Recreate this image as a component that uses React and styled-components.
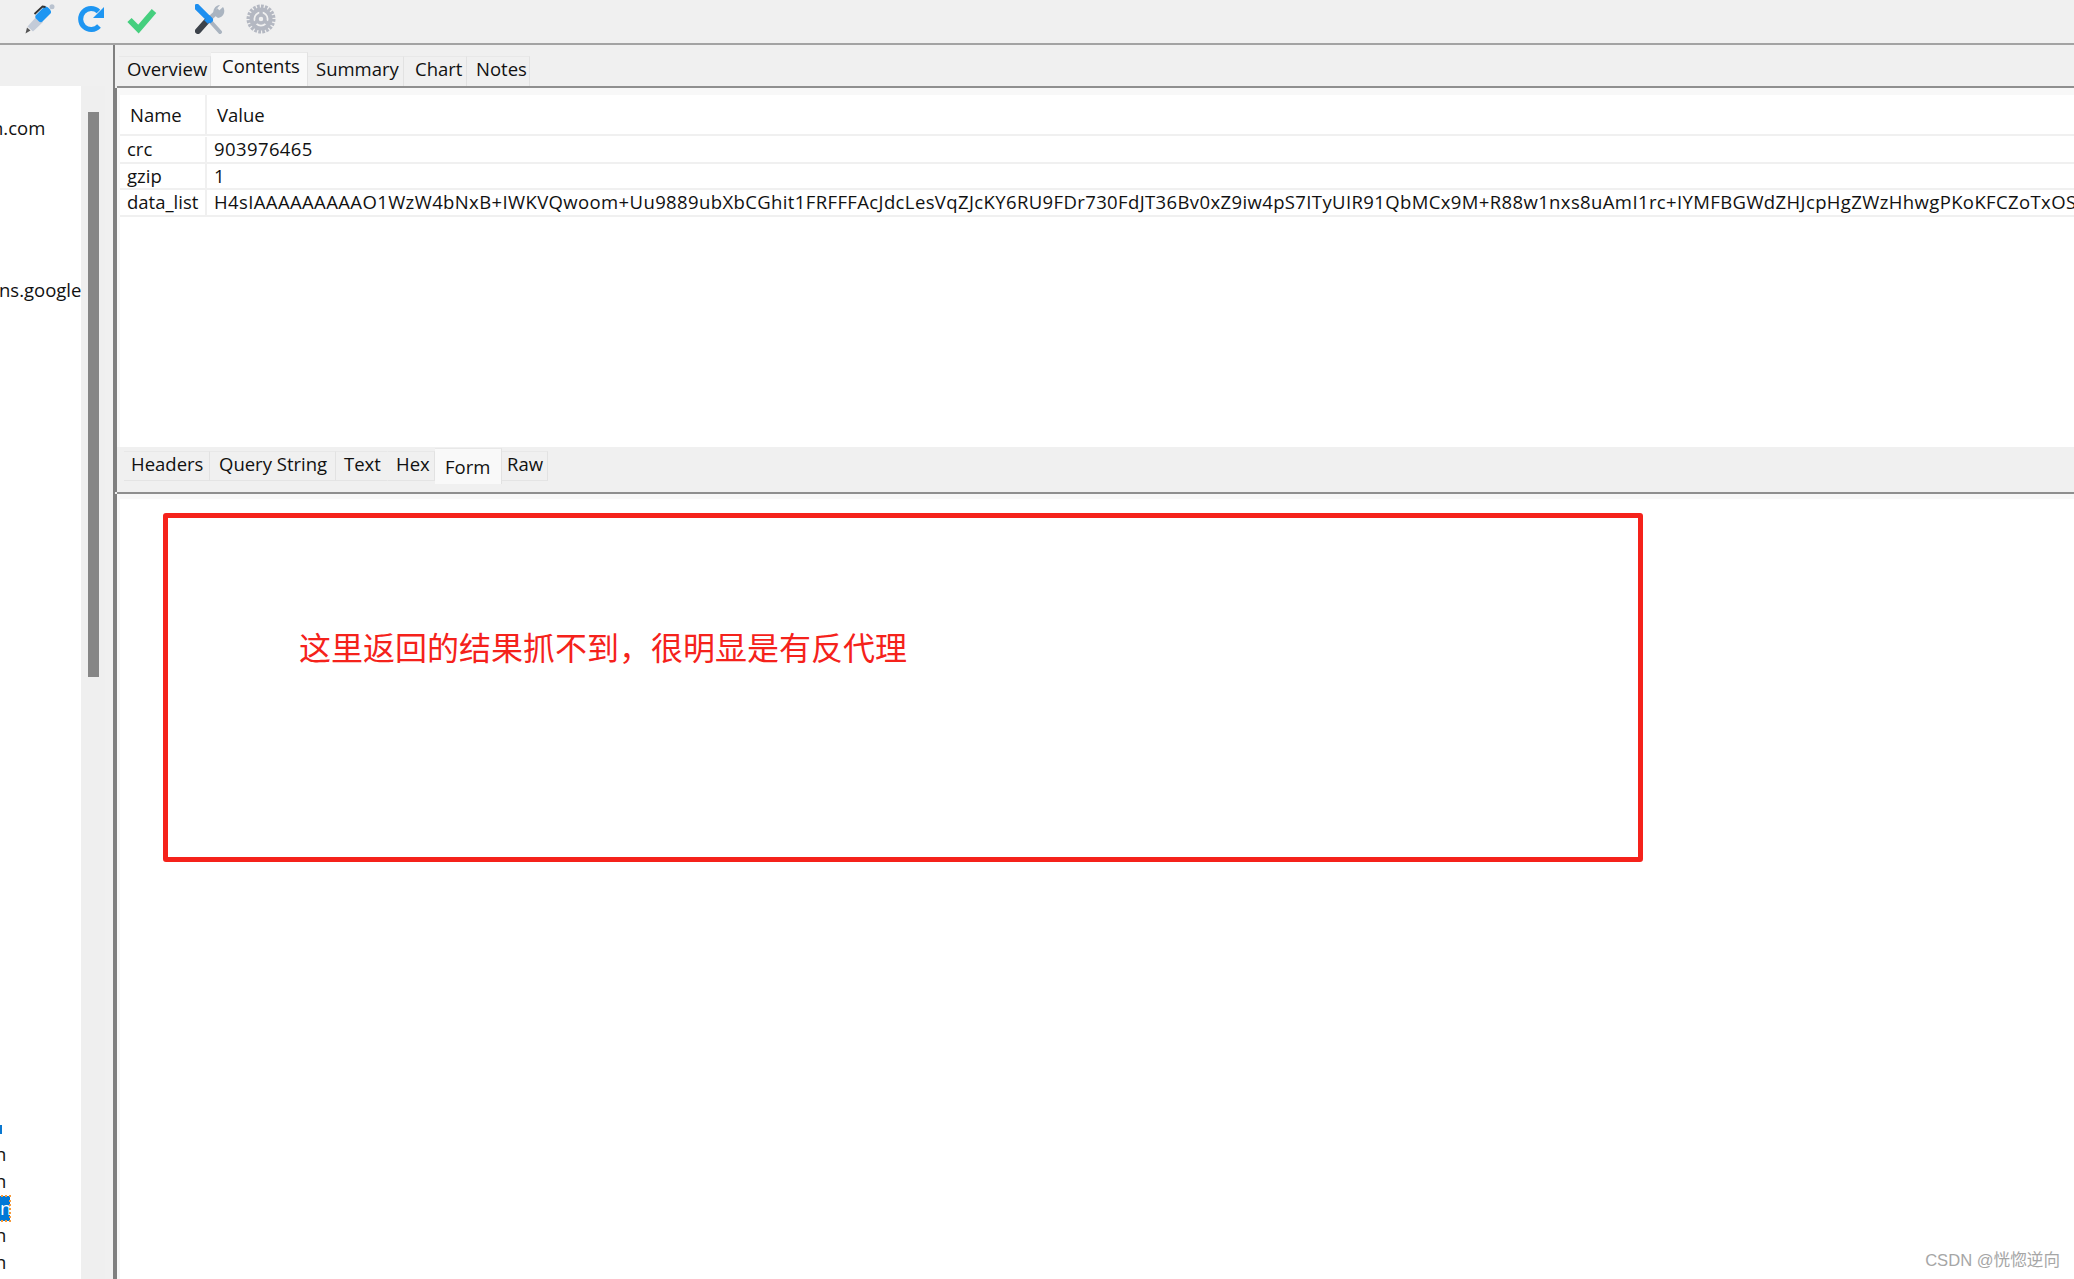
import React from "react";
import styled, { createGlobalStyle } from "styled-components";

const GlobalStyle = createGlobalStyle`
  html, body { margin: 0; padding: 0; background: #fff; }
  body { font-family: "Open Sans", "Noto Sans", "Noto Sans CJK SC", sans-serif; color: #111; }
`;

const Page = styled.div`
  width: 2074px;
  height: 1279px;
  overflow: hidden;
  display: flex;
  flex-direction: column;
  font-size: 18.5px;
`;

const Toolbar = styled.div`
  height: 45px;
  flex: none;
  background: #f0f0f0;
  border-bottom: 2px solid #a3a3a3;
  display: flex;
  align-items: flex-start;
  padding: 4px 0 0 25px;
  box-sizing: border-box;
`;

const ToolIcon = styled.svg`
  width: ${({ $w }) => $w}px;
  height: 30px;
  margin-right: ${({ $gap }) => $gap}px;
  flex: none;
`;

const Main = styled.div`
  flex: 1;
  display: flex;
  min-height: 0;
`;

const LeftPane = styled.div`
  width: 113px;
  flex: none;
  background: #f0f0f0;
  padding-top: 41px;
  box-sizing: border-box;
  display: flex;
`;

const HostList = styled.div`
  width: 81px;
  flex: none;
  background: #fff;
  padding-top: 28px;
  overflow: hidden;
`;

const HostRow = styled.div`
  height: 27px;
  line-height: 27px;
  white-space: nowrap;
  margin-left: ${({ $shift }) => $shift || 0}px;
`;

const SelectedHost = styled.span`
  display: inline-block;
  height: 25px;
  line-height: 24px;
  width: 15px;
  padding-left: 5px;
  box-sizing: border-box;
  background: #0078d7;
  color: #fff;
  outline: 2px dotted #f59a3c;
  outline-offset: -1px;
`;

const BlueStub = styled.span`
  display: inline-block;
  width: 2px;
  height: 9px;
  background: #0a78d0;
  margin-left: 5px;
`;

const ScrollTrack = styled.div`
  width: 24px;
  flex: none;
  background: #efefef;
  padding-top: 26px;
  box-sizing: border-box;
`;

const ScrollThumb = styled.div`
  width: 11px;
  height: 565px;
  margin-left: 7px;
  background: #868686;
`;

const Splitter = styled.div`
  flex: none;
  width: 2px;
  background: #7f7f7f;
`;

const RightPane = styled.div`
  flex: 1;
  min-width: 0;
  display: flex;
  flex-direction: column;
  background: #f0f0f0;
`;

const TopTabs = styled.div`
  height: 41px;
  flex: none;
  display: flex;
  align-items: flex-end;
  padding-left: 4px;
  box-sizing: border-box;
`;

const Tab = styled.div`
  width: ${({ $w }) => $w}px;
  height: ${({ $active, $h }) => ($active ? $h + 4 : $h)}px;
  flex: none;
  box-sizing: border-box;
  background: ${({ $active }) => ($active ? "#f9f9f9" : "#f0f0f0")};
  border-right: 1px solid ${({ $plain }) => ($plain ? "transparent" : "#e2e2e2")};
  border-top: 1px solid #e8e8e8;
  padding-left: ${({ $pad }) => $pad}px;
  line-height: ${({ $active, $h }) => ($active ? $h - 5 : $h - 7)}px;
  white-space: nowrap;
`;

const TabLine = styled.div`
  height: 2px;
  flex: none;
  background: #8f8f8f;
  margin-left: 2px;
`;

const UpperBody = styled.div`
  height: 359px;
  flex: none;
  background: #f8f8f8;
  padding: 7px 0 0 3px;
  border-left: 2px solid #7f7f7f;
  box-sizing: border-box;
`;

const Table = styled.div`
  height: 100%;
  background: #fff;
  overflow: hidden;
`;

const Row = styled.div`
  display: flex;
  height: ${({ $h }) => $h}px;
  line-height: ${({ $h }) => $h}px;
  border-bottom: 2px solid #f0f0f0;
  margin-bottom: ${({ $mb }) => $mb || 0}px;
  white-space: nowrap;
`;

const NameCell = styled.div`
  width: 87px;
  flex: none;
  box-sizing: border-box;
  padding-left: ${({ $head }) => ($head ? 10 : 7)}px;
  border-right: 2px solid #f0f0f0;
`;

const ValueCell = styled.div`
  flex: 1;
  min-width: 0;
  padding-left: ${({ $head }) => ($head ? 10 : 7)}px;
  letter-spacing: ${({ $spacing }) => $spacing || 0}px;
`;

const LowerTabs = styled.div`
  height: 45px;
  flex: none;
  display: flex;
  align-items: flex-start;
  padding: 1px 0 0 7px;
  box-sizing: border-box;
  border-left: 2px solid #7f7f7f;
`;

const FormTab = styled(Tab)`
  line-height: 35px;
`;

const LowerTab = styled(Tab)`
  margin-top: 3px;
  border-bottom: 1px solid #e4e4e4;
`;

const LowerBody = styled.div`
  flex: 1;
  background: #f8f8f8;
  padding: 5px 0 0 3px;
  border-left: 2px solid #7f7f7f;
  box-sizing: border-box;
  display: flex;
  flex-direction: column;
  min-height: 0;
`;

const Content = styled.div`
  flex: 1;
  background: #fff;
  padding: 14px 0 0 43px;
  position: relative;
`;

const RedBox = styled.div`
  width: 1480px;
  height: 349px;
  box-sizing: border-box;
  border: 5px solid #f5221b;
  border-radius: 3px;
  padding: 106px 0 0 131px;
`;

const RedNote = styled.div`
  font-family: "Noto Sans CJK SC", sans-serif;
  font-size: 32px;
  line-height: 44px;
  color: #f5221b;
  white-space: nowrap;
`;

const Watermark = styled.div`
  position: absolute;
  right: 14px;
  bottom: 8px;
  font-family: "Liberation Sans", "Noto Sans CJK SC", sans-serif;
  font-size: 16.6px;
  color: #a6a6a6;
`;

const hostRows = Array.from({ length: 43 }, (_, i) => i);

const DATA_LIST =
  "H4sIAAAAAAAAAO1WzW4bNxB+IWKVQwoom+Uu9889ubXbCGhit1FRFFFAcJdcLesVqZJcKY6RU9FDr730FdJT36Bv0xZ9iw4pS7ITyUIR91QbMCx9M+R88w1nxs8uAmI1rc+IYMFBGWdZHJcpHgZWzHhwgPKoKFCZoTxOS";

function HostCell({ i }) {
  if (i === 0) return <HostRow $shift={-8}>n.com</HostRow>;
  if (i === 6) return <HostRow $shift={-1}>ns.google</HostRow>;
  if (i === 37) return <HostRow $shift={-5}><BlueStub /></HostRow>;
  if (i === 40) return <HostRow $shift={-5}><SelectedHost>n</SelectedHost></HostRow>;
  if (i === 38 || i === 39 || i === 41 || i === 42) return <HostRow $shift={-5}>n</HostRow>;
  return <HostRow />;
}

export default function App() {
  return (
    <Page>
      <GlobalStyle />
      <Toolbar>
        <ToolIcon $w={30} $gap={22} viewBox="0 0 30 30">
          <path d="M0.500 29.500l1.500-6 3.500 3z" fill="#555" />
          <path d="M2.500 22.500L12 12l6 6-10 9.500z" fill="#c3cbd8" />
          <path d="M11 11l8-8c2.500-2.500 9 4 6.500 6.500l-8 8c-1 1-2.500 1-3.500 0l-3-3c-1-1-1-2.500 0-3.500z" fill="#1e96f2" />
          <path d="M9.500 10l8-7.500 3 .5" stroke="#333" strokeWidth="1.800" fill="none" />
          <circle cx="27" cy="2.800" r="2.500" fill="#b9c2cf" />
        </ToolIcon>
        <ToolIcon $w={28} $gap={22} viewBox="0 0 28 30">
          <path d="M21.500 7.500A10.500 10.500 0 1 0 22 22" stroke="#1e96f2" strokeWidth="5" fill="none" />
          <path d="M27 3v11H16z" fill="#1e96f2" />
        </ToolIcon>
        <ToolIcon $w={30} $gap={38} viewBox="0 0 30 30">
          <path d="M2.500 16l9 9L27 7" stroke="#45cf7e" strokeWidth="6" fill="none" />
        </ToolIcon>
        <ToolIcon $w={30} $gap={21} viewBox="0 0 30 30">
          <path d="M16 18l9 10" stroke="#aab4c0" strokeWidth="4" strokeLinecap="round" />
          <path d="M12 17L24 6" stroke="#aab4c0" strokeWidth="4.500" />
          <path d="M28 3l-5 4.500-2-2 4-4.500a7 7 0 0 0-6 10l4 3a7 7 0 0 0 5-11z" fill="#aab4c0" />
          <path d="M2 3l13 13" stroke="#1e8ff0" strokeWidth="6" strokeLinecap="round" />
          <path d="M11 18L3 27" stroke="#3d434b" strokeWidth="6" strokeLinecap="round" />
          <path d="M16 13l-5 5" stroke="#1e8ff0" strokeWidth="5" />
        </ToolIcon>
        <ToolIcon $w={30} $gap={0} viewBox="0 0 30 30">
          <circle cx="15" cy="15" r="12.500" fill="none" stroke="#b4b8c2" strokeWidth="4" strokeDasharray="2.700 1.200" />
          <circle cx="15" cy="15" r="9.500" fill="none" stroke="#b4b8c2" strokeWidth="4" />
          <circle cx="15" cy="15" r="4" fill="none" stroke="#b4b8c2" strokeWidth="3.500" />
          <path d="M15 7v4M8 19.500l3.500-2.500M22 19.500L18.500 17" stroke="#b4b8c2" strokeWidth="3.500" />
        </ToolIcon>
      </Toolbar>
      <Main>
        <LeftPane>
          <HostList>
            {hostRows.map((i) => (
              <HostCell key={i} i={i} />
            ))}
          </HostList>
          <ScrollTrack>
            <ScrollThumb />
          </ScrollTrack>
        </LeftPane>
        <Splitter />
        <RightPane>
          <TopTabs>
            <Tab $w={92} $h={30} $pad={8}>Overview</Tab>
            <Tab $w={97} $h={30} $active $pad={11}>Contents</Tab>
            <Tab $w={96} $h={30} $pad={8}>Summary</Tab>
            <Tab $w={63} $h={30} $pad={11}>Chart</Tab>
            <Tab $w={63} $h={30} $pad={9}>Notes</Tab>
          </TopTabs>
          <TabLine />
          <UpperBody>
            <Table>
              <Row $h={39} $mb={1}>
                <NameCell $head>Name</NameCell>
                <ValueCell $head>Value</ValueCell>
              </Row>
              <Row $h={24.5}>
                <NameCell>crc</NameCell>
                <ValueCell $spacing={0.4}>903976465</ValueCell>
              </Row>
              <Row $h={24.5}>
                <NameCell>gzip</NameCell>
                <ValueCell>1</ValueCell>
              </Row>
              <Row $h={24.5}>
                <NameCell>data_list</NameCell>
                <ValueCell $spacing={0.38}>{DATA_LIST}</ValueCell>
              </Row>
            </Table>
          </UpperBody>
          <LowerTabs>
            <LowerTab $w={86} $h={30} $pad={7}>Headers</LowerTab>
            <LowerTab $w={126} $h={30} $pad={9}>Query String</LowerTab>
            <LowerTab $w={52} $h={30} $pad={8} $plain>Text</LowerTab>
            <LowerTab $w={47} $h={30} $pad={8}>Hex</LowerTab>
            <FormTab $w={67} $h={32} $active $pad={10}>Form</FormTab>
            <LowerTab $w={46} $h={30} $pad={5}>Raw</LowerTab>
          </LowerTabs>
          <TabLine />
          <LowerBody>
            <Content>
              <RedBox>
                <RedNote>这里返回的结果抓不到，很明显是有反代理</RedNote>
              </RedBox>
              <Watermark>CSDN @恍惚逆向</Watermark>
            </Content>
          </LowerBody>
        </RightPane>
      </Main>
    </Page>
  );
}
